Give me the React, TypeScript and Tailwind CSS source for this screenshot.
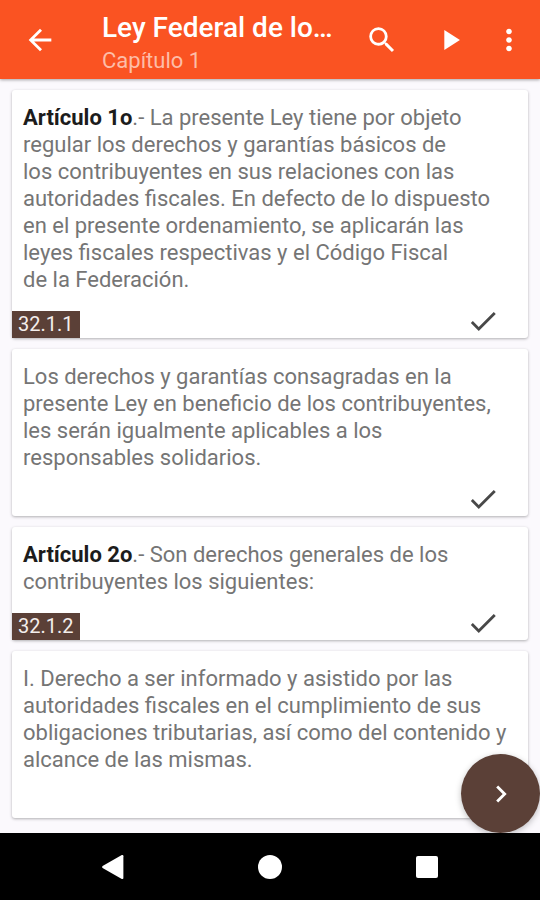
import {
  MdArrowBack,
  MdCheck,
  MdChevronRight,
  MdMoreVert,
  MdPlayArrow,
  MdSearch,
} from "react-icons/md";

interface ArticleCardProps {
  heading?: string;
  lines: string[];
  code?: string;
}

const articles: ArticleCardProps[] = [
  {
    heading: "Artículo 1o",
    lines: [
      ".- La presente Ley tiene por objeto",
      "regular los derechos y garantías básicos de",
      "los contribuyentes en sus relaciones con las",
      "autoridades fiscales. En defecto de lo dispuesto",
      "en el presente ordenamiento, se aplicarán las",
      "leyes fiscales respectivas y el Código Fiscal",
      "de la Federación.",
    ],
    code: "32.1.1",
  },
  {
    lines: [
      "Los derechos y garantías consagradas en la",
      "presente Ley en beneficio de los contribuyentes,",
      "les serán igualmente aplicables a los",
      "responsables solidarios.",
    ],
  },
  {
    heading: "Artículo 2o",
    lines: [
      ".- Son derechos generales de los",
      "contribuyentes los siguientes:",
    ],
    code: "32.1.2",
  },
  {
    lines: [
      "I. Derecho a ser informado y asistido por las",
      "autoridades fiscales en el cumplimiento de sus",
      "obligaciones tributarias, así como del contenido y",
      "alcance de las mismas.",
    ],
  },
];

const Header = () => (
  <header className="relative z-10 flex h-[79px] items-center bg-[#fa5322] pr-1.5 text-white shadow-[0_1px_3px_rgba(0,0,0,0.35)]">
    <button
      type="button"
      aria-label="Atrás"
      className="flex h-full w-20 shrink-0 items-center justify-center"
    >
      <MdArrowBack size={34} />
    </button>
    <div className="min-w-0 flex-1 pt-2 pl-[22px]">
      <h1 className="truncate text-[28px] leading-[34px] font-medium">
        Ley Federal de lo…
      </h1>
      <p className="text-[22px] leading-[32px] text-[#fdbda8]">Capítulo 1</p>
    </div>
    <button
      type="button"
      aria-label="Buscar"
      className="flex h-full w-[68px] shrink-0 items-center justify-center"
    >
      <MdSearch size={34} />
    </button>
    <button
      type="button"
      aria-label="Reproducir"
      className="flex h-full w-[68px] shrink-0 items-center justify-center"
    >
      <MdPlayArrow size={34} />
    </button>
    <button
      type="button"
      aria-label="Más opciones"
      className="flex h-full w-[50px] shrink-0 items-center justify-center"
    >
      <MdMoreVert size={34} />
    </button>
  </header>
);

const ArticleCard = ({ heading, lines, code }: ArticleCardProps) => (
  <article className="rounded-[3px] bg-white pt-3.5 shadow-[0_1px_3px_rgba(0,0,0,0.3)]">
    <p className="px-[11px] text-[22px] leading-[27px] text-[#757575]">
      {lines.map((line, i) => (
        <span key={line} className="block">
          {i === 0 && heading && (
            <b className="font-bold text-[#1c1c1c]">{heading}</b>
          )}
          {line}
        </span>
      ))}
    </p>
    <div className="flex h-[45px] items-end justify-between pr-7">
      {code ? (
        <span className="bg-[#5b4037] px-1.5 text-[20px] leading-[27px] text-[#f3eeec]">
          {code}
        </span>
      ) : (
        <span />
      )}
      <button type="button" aria-label="Marcar" className="text-[#484848]">
        <MdCheck size={34} />
      </button>
    </div>
  </article>
);

const NavBar = () => (
  <nav className="grid h-[67px] grid-cols-3 bg-black px-[34px]">
    <button
      type="button"
      aria-label="Volver"
      className="flex items-center justify-center"
    >
      <svg width="24" height="26" viewBox="0 0 24 26" fill="#fff">
        <path d="M1.6 12.1 20.8 1.1Q22.4.4 22.4 2.2V23.8Q22.4 25.6 20.8 24.9L1.6 13.9Q.4 13 1.6 12.1Z" />
      </svg>
    </button>
    <button
      type="button"
      aria-label="Inicio"
      className="flex items-center justify-center"
    >
      <span className="size-6 rounded-full bg-white" />
    </button>
    <button
      type="button"
      aria-label="Recientes"
      className="flex items-center justify-center"
    >
      <span className="size-[22px] rounded-[2px] bg-white" />
    </button>
  </nav>
);

const App = () => {
  return (
    <div className="flex min-h-screen flex-col bg-[#fbf9fd] font-[Roboto,sans-serif]">
      <Header />
      <main className="relative flex flex-1 flex-col gap-[11px] px-3 pt-[11px] pb-[15px]">
        {articles.map((article) => (
          <ArticleCard key={article.lines[0]} {...article} />
        ))}
        <button
          type="button"
          aria-label="Siguiente"
          className="absolute right-0 bottom-0 flex size-[79px] items-center justify-center rounded-full bg-[#5b4037] text-white shadow-[0_2px_6px_rgba(0,0,0,0.25)]"
        >
          <MdChevronRight size={34} />
        </button>
      </main>
      <NavBar />
    </div>
  );
};

export default App;
